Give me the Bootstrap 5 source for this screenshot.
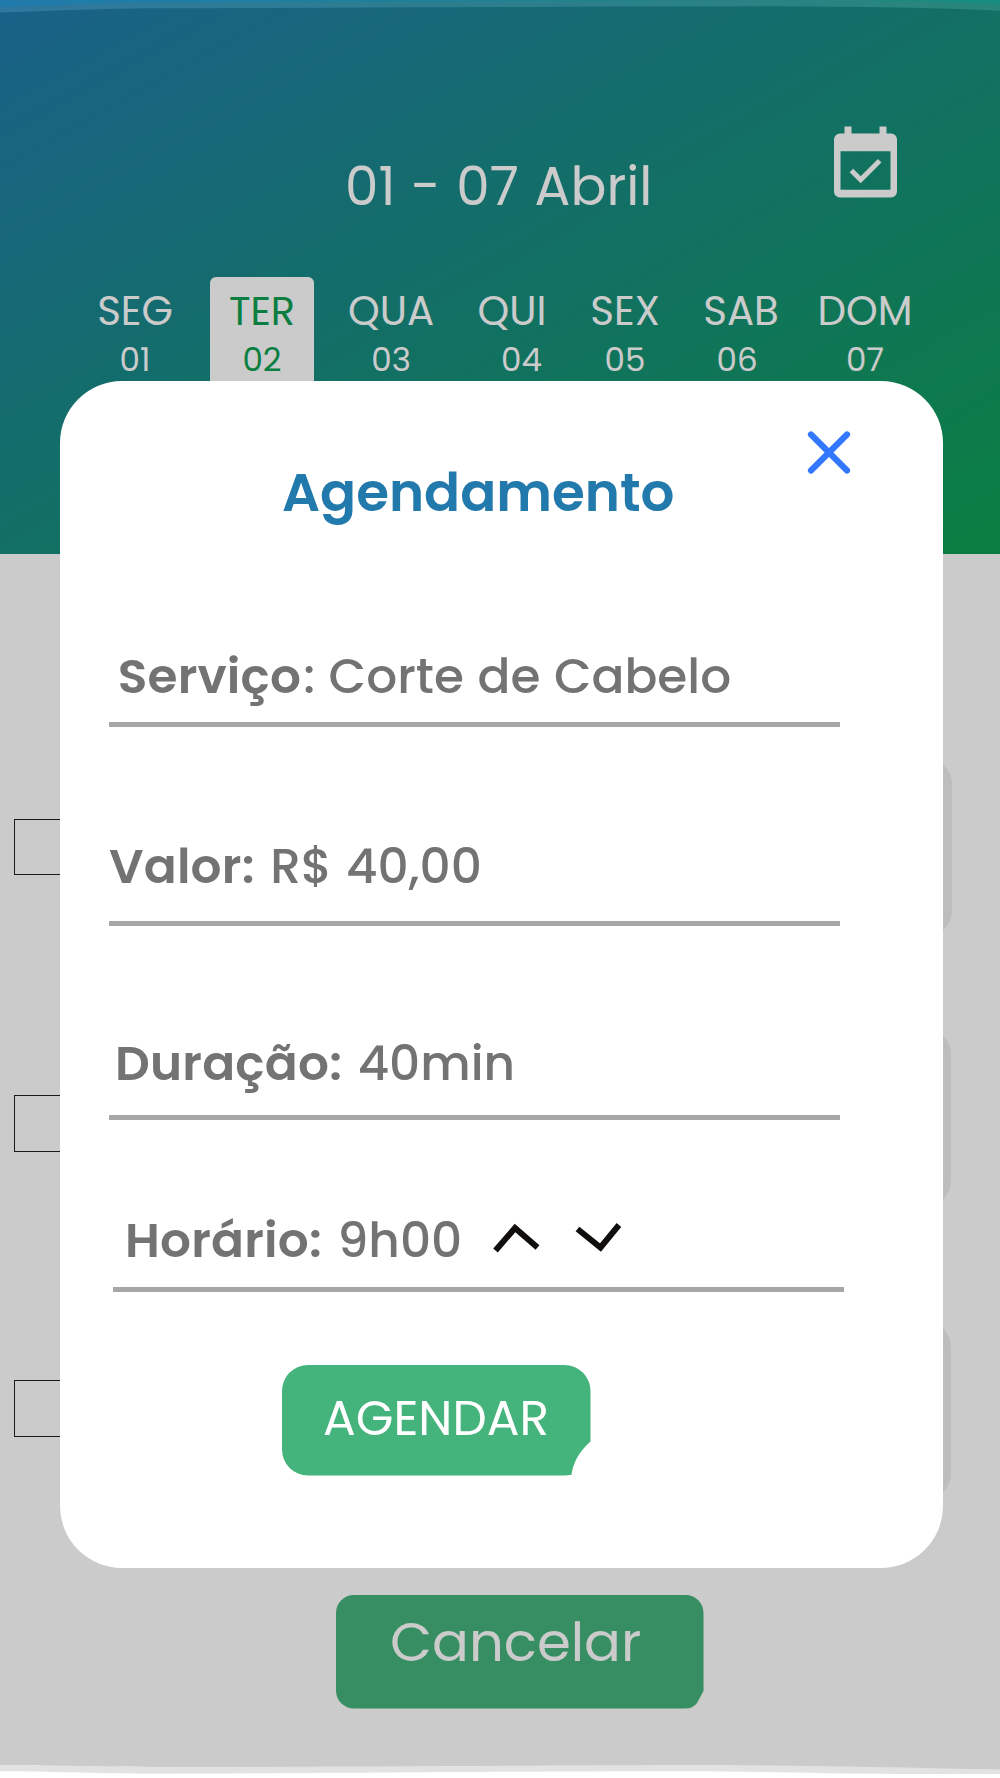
<!DOCTYPE html>
<html lang="pt-BR">
<head>
<meta charset="utf-8">
<meta name="viewport" content="width=device-width, initial-scale=1">
<title>Agendamento</title>
<link href="https://cdn.jsdelivr.net/npm/bootstrap@5.3.0/dist/css/bootstrap.min.css" rel="stylesheet">
<style>
  body { font-family: Poppins, Inter, sans-serif; background: #fff; }
  .screen { width: 1000px; height: 1778px; }

  /* Week header */
  .week-header { height: 554px; background: linear-gradient(to bottom right, #217aac, #0e9f52); color: #fff; }
  .title-row { padding: 126px 103px 0 345px; height: 277px; }
  .week-title { font-size: 53.2px; line-height: 60px; margin-top: 31px; word-spacing: 1.6px; white-space: nowrap; }
  .week-days { display: grid; grid-template-columns: 150px 104px 154px 88px 138px 94px 154px; padding-left: 60px; height: 130px; }
  .day { padding-top: 10.5px; font-size: 40.3px; line-height: 46px; }
  .day-num { font-size: 32.5px; line-height: 36px; margin-top: 8.5px; }
  .day.selected { background: #fff; color: #0ea054; border-radius: 6px 6px 0 0; font-size: 39.8px; }
  .shift-right { padding-left: 19px; }
  .shift-left { padding-right: 8px; }

  /* Slots behind the dialog */
  .slots { padding: 204.5px 48px 0 14px; height: 1041px; }
  .slot { height: 177px; margin-bottom: 93.5px; }
  .slot-check { width: 58px; height: 56.5px; border: 1.5px solid #222; border-radius: 0; }
  .slot-card { width: 822px; height: 177px; border-radius: 25px; background: #eee; border: 0; }
  .slot:nth-child(2) { margin-bottom: 115.5px; }
  .slot:nth-child(2) .slot-check { margin-top: 12px; }
  .slot:nth-child(3) .slot-check { margin-bottom: 3px; }
  .slot:nth-child(n+2) .slot-card { width: 821px; margin-right: 1px; }
  .btn-cancelar { width: 368px; height: 114px; margin-left: 336px; padding: 17px 0 37px 54px; border: 0;
    background: #45b37c; color: #fff; font-size: 54.5px; line-height: 60px; text-align: left;
    clip-path: path("M18 0H349.500A18 18 0 0 1 367.500 18V96L361 108Q357 113.500 349 113.500H18A18 18 0 0 1 0 95.500V18A18 18 0 0 1 18 0Z"); }

  /* Dialog */
  .dialog-panel { left: 60px; top: 380.5px; width: 883.4px; height: 1187.5px; border-radius: 62px; background: #fff; padding: 50px 0 0 49px; }
  .close-btn { width: 44px; height: 44px; margin-left: 698px; }
  .dialog-title { font-size: 53.2px; line-height: 58px; font-weight: 600; color: #2179ac; margin: -11px 0 0 173px; }
  .field { width: 731px; border-bottom: 5px solid #a6a6a6; color: #737373; font-size: 48.6px; line-height: 56px; font-weight: 500; white-space: pre; word-spacing: .9px; }
  .field b { font-weight: 600; letter-spacing: .2px; margin-right: 2px; }
  .field-servico { margin-top: 126px; padding: 0 0 18px 8.7px; }
  .field-valor { margin-top: 111px; padding-bottom: 27px; }
  .field-duracao { margin-top: 109px; padding: 0 0 24px 6px; }
  .field-horario { margin: 92px 0 0 4px; padding: 0 0 19px 12px; }
  .time-arrows { width: 128px; height: 34px; margin: 9px 0 0 31px; }
  .btn-agendar { width: 309px; height: 111px; margin: 73.5px 0 0 173px; padding: 25px 0 30px 41px; border: 0;
    background: #45b37c; color: #fff; font-size: 48.5px; line-height: 56px; text-align: left;
    clip-path: path("M26 0H282.500A26 26 0 0 1 308.500 26V76.500Q292 91 289.500 109.700Q286 110.500 282 110.500H26A26 26 0 0 1 0 84.500V26A26 26 0 0 1 26 0Z"); }
</style>
</head>
<body>
<main class="screen position-relative overflow-hidden">

  <header class="week-header">
    <div class="title-row d-flex justify-content-between align-items-start">
      <div class="week-title">01 - 07 Abril</div>
      <svg width="63" height="72" viewBox="0 0 63 72" fill="#fff">
        <path fill-rule="evenodd" d="M10.500 .5h7v7h28v-7h7v7h4.500a6 6 0 0 1 6 6v52a6 6 0 0 1-6 6h-51a6 6 0 0 1-6-6v-52a6 6 0 0 1 6-6h4.500zM6.500 25.300v38.500h50v-38.500z"/>
        <path d="M17.400 44.500l9.300 9.300 19-19" fill="none" stroke="#fff" stroke-width="5"/>
      </svg>
    </div>
    <div class="week-days text-center">
      <div class="day">SEG<div class="day-num">01</div></div>
      <div class="day selected">TER<div class="day-num">02</div></div>
      <div class="day">QUA<div class="day-num">03</div></div>
      <div class="day">QUI<div class="day-num shift-right">04</div></div>
      <div class="day">SEX<div class="day-num">05</div></div>
      <div class="day">SAB<div class="day-num shift-left">06</div></div>
      <div class="day">DOM<div class="day-num">07</div></div>
    </div>
  </header>

  <section class="slots">
    <div class="slot d-flex justify-content-between align-items-center"><div class="slot-check"></div><div class="slot-card"></div></div>
    <div class="slot d-flex justify-content-between align-items-center"><div class="slot-check"></div><div class="slot-card"></div></div>
    <div class="slot d-flex justify-content-between align-items-center"><div class="slot-check"></div><div class="slot-card"></div></div>
  </section>
  <button class="btn-cancelar d-block" type="button">Cancelar</button>

  <!-- Dimming layer with its uneven translucent outline -->
  <svg class="position-absolute top-0 start-0" width="1000" height="1778" viewBox="0 0 1000 1778">
    <path fill="#000" fill-opacity=".204" d="M0 12.500C60 10.500 110 8.500 150 8.300C350 8 550 6.500 750 6.300C850 6.500 950 8 1000 10.700V1769.500C900 1767.500 800 1765 680 1765C500 1765.500 350 1767 200 1767C120 1767 60 1766 30 1765H0Z"/>
    <path fill="#707070" fill-opacity=".2" d="M0 7.500C60 5 110 3 150 2.800C350 2.300 550 .5 750 0H850C920 1 960 2.500 1000 4.500V10.700C950 8 850 6.500 750 6.300C550 6.500 350 8 150 8.300C110 8.500 60 10.500 0 12.500Z"/>
    <path fill="#707070" fill-opacity=".2" d="M0 1765H30C60 1766 120 1767 200 1767C350 1767 500 1765.500 680 1765C800 1765 900 1767.500 1000 1769.500V1774H900C820 1773.500 760 1771.300 680 1771.300C450 1771.500 300 1773.500 150 1773.700C90 1773.300 50 1771.500 0 1771.300Z"/>
  </svg>

  <section class="dialog-panel position-absolute" role="dialog">
    <button class="close-btn d-block border-0 bg-transparent p-0" type="button" aria-label="Fechar">
      <svg class="d-block" width="44" height="44" viewBox="0 0 44 44"><path d="M4 3.500L40 39.500M40 3.500L4 39.500" stroke="#3377ff" stroke-width="6.200" stroke-linecap="round"/></svg>
    </button>
    <h1 class="dialog-title">Agendamento</h1>
    <div class="field field-servico"><b>Serviço</b>: Corte de Cabelo</div>
    <div class="field field-valor"><b>Valor:</b> R$ 40,00</div>
    <div class="field field-duracao"><b>Duração:</b> 40min</div>
    <div class="field field-horario d-flex"><div><b>Horário:</b> 9h00</div>
      <svg class="time-arrows" viewBox="0 0 128 34" fill="none" stroke="#0f0e0d" stroke-width="6"><path d="M2.500 29.500L22 7L44.500 26.500M84.500 8L107.500 26.500L126 4"/></svg></div>
    <button class="btn-agendar d-block" type="button">AGENDAR</button>
  </section>
</main>
<script src="https://cdn.jsdelivr.net/npm/bootstrap@5.3.0/dist/js/bootstrap.bundle.min.js"></script>
</body>
</html>
